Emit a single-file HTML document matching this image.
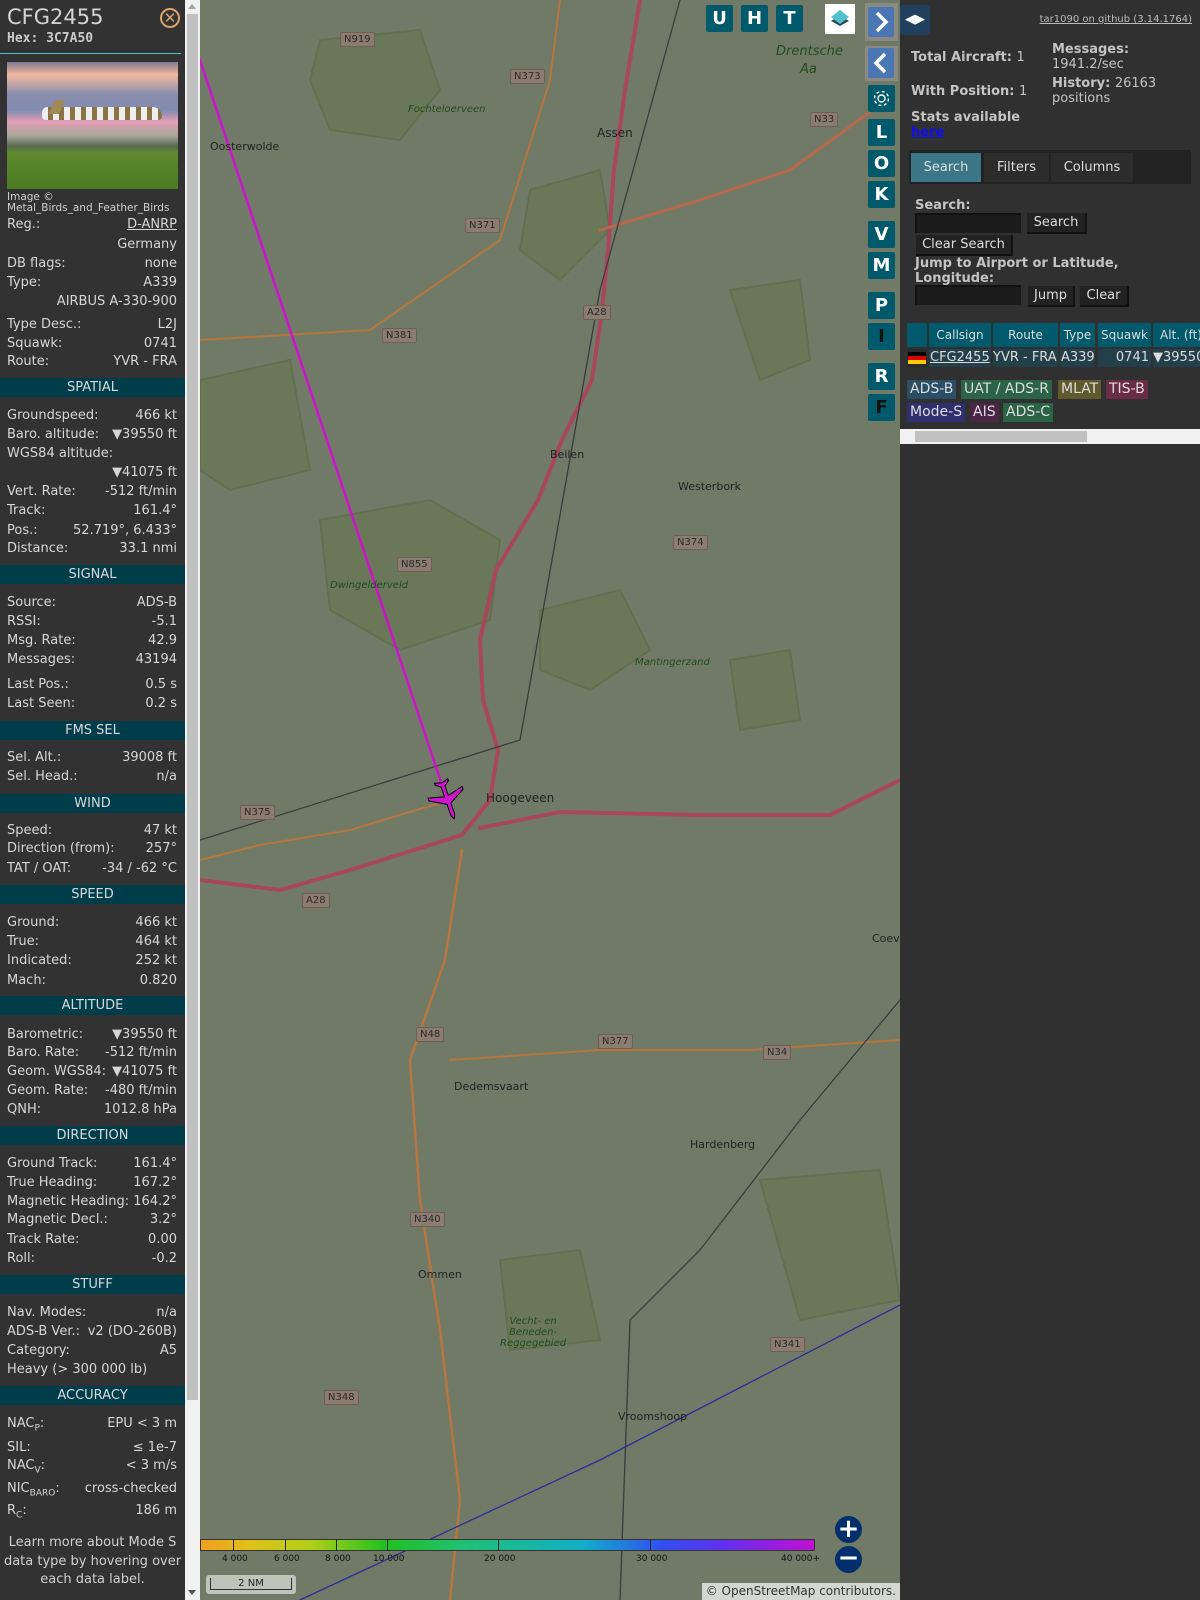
<!DOCTYPE html>
<html><head><meta charset="utf-8"><style>
*{margin:0;padding:0;box-sizing:border-box}
body{width:1200px;height:1600px;overflow:hidden;background:#303030;font-family:"DejaVu Sans","Liberation Sans",sans-serif;position:relative}
#side{position:absolute;left:0;top:0;width:185px;height:1600px;background:#323232;color:#d6d6d6;font-size:13px}
.r{position:absolute;left:7px;right:8px;height:17px;line-height:17px;white-space:nowrap}
.r .v{position:absolute;right:0;top:0}
.h{position:absolute;left:0;width:185px;background:#003d4a;color:#d8d8d8;text-align:center;font-size:13px;height:19px;line-height:19px}
#sb{position:absolute;left:185px;top:0;width:15px;height:1600px;background:#f1f1f1}
#map{position:absolute;left:200px;top:0;width:700px;height:1600px;background:#717a67;overflow:hidden}
.btn{position:absolute;width:27px;height:27px;background:#005a6b;color:#fff;font-weight:bold;font-size:18px;text-align:center;line-height:27px;border-radius:2px}
.lbl{position:absolute;font-size:11px;color:#222;white-space:nowrap}
.rl{position:absolute;font-size:10px;color:#2a2a2a;background:#8c7c70;border:1px solid #6e5f55;padding:1px 3px;border-radius:2px}
.gl{position:absolute;font-size:10px;color:#1d4f1d;font-style:italic;white-space:nowrap}
#right{position:absolute;left:900px;top:0;width:300px;height:1600px;background:#303030;color:#c8c8c8}
.b{position:absolute;font-weight:bold;font-size:13px;color:#c4c4c4;white-space:nowrap}
.bt{position:absolute;background:#222;color:#ddd;font-size:13px;border-right:2px solid #111;border-bottom:2px solid #111;text-align:center;line-height:19px;height:21px}
.inp{position:absolute;background:#1c1c1c;border-top:2px solid #111;border-left:2px solid #111;height:20px}
.th{position:absolute;top:323px;height:24px;background:#005a6b;color:#ddd;font-size:12px;text-align:center;line-height:24px;white-space:nowrap;overflow:hidden}
.td{position:absolute;top:349px;height:18px;background:#233f4a;color:#ddd;font-size:13px;line-height:18px;white-space:nowrap;overflow:hidden}
.bd{position:absolute;height:19px;line-height:19px;font-size:14px;padding:0 3px;color:#ddd}
</style></head><body>
<div id="side">
<div style="position:absolute;left:7px;top:5px;font-size:21px;color:#d4d4d4">CFG2455</div>
<div style="position:absolute;left:7px;top:31px;font-size:13px;font-weight:bold;font-family:'DejaVu Sans Mono',monospace;color:#ccc">Hex: 3C7A50</div>
<div style="position:absolute;left:160px;top:8px;width:20px;height:20px;border:2px solid #d9a46a;border-radius:50%;color:#d9a46a;font-size:15px;text-align:center;line-height:16px">✕</div>
<div style="position:absolute;left:0;top:53px;width:181px;height:1px;background:#4cc4cc"></div>
<div style="position:absolute;left:7px;top:62px;width:171px;height:127px;background:linear-gradient(#7e7a94 0%,#f2b99e 10%,#8c8fae 25%,#7f8bb0 38%,#e59fb8 47%,#a9a79c 58%,#5a6a50 66%,#5d8a2c 72%,#4a7a22 100%)">
<div style="position:absolute;left:35px;top:45px;width:120px;height:13px;background:repeating-linear-gradient(90deg,#eee 0 6px,#8a7444 6px 11px);border-radius:6px 10px 4px 4px"></div>
<div style="position:absolute;left:45px;top:38px;width:10px;height:14px;background:#a28a58;transform:skewX(-25deg)"></div>
</div>
<div style="position:absolute;left:7px;top:192px;font-size:10.5px;line-height:11px;color:#d0d0d0">Image ©<br>Metal_Birds_and_Feather_Birds</div>
<div class="r" style="top:216px">Reg.:<span class="v" style="text-decoration:underline">D-ANRP</span></div>
<div class="r" style="top:236px"><span class="v">Germany</span></div>
<div class="r" style="top:255px">DB flags:<span class="v">none</span></div>
<div class="r" style="top:274px">Type:<span class="v">A339</span></div>
<div class="r" style="top:293px"><span class="v">AIRBUS A-330-900</span></div>
<div class="r" style="top:316px">Type Desc.:<span class="v">L2J</span></div>
<div class="r" style="top:335px">Squawk:<span class="v">0741</span></div>
<div class="r" style="top:353px">Route:<span class="v">YVR - FRA</span></div>
<div class="h" style="top:378px">SPATIAL</div>
<div class="r" style="top:407px">Groundspeed:<span class="v">466 kt</span></div>
<div class="r" style="top:426px">Baro. altitude:<span class="v">▼39550 ft</span></div>
<div class="r" style="top:445px">WGS84 altitude:</div>
<div class="r" style="top:464px"><span class="v">▼41075 ft</span></div>
<div class="r" style="top:483px">Vert. Rate:<span class="v">-512 ft/min</span></div>
<div class="r" style="top:502px">Track:<span class="v">161.4°</span></div>
<div class="r" style="top:522px">Pos.:<span class="v">52.719°, 6.433°</span></div>
<div class="r" style="top:540px">Distance:<span class="v">33.1 nmi</span></div>
<div class="h" style="top:565px">SIGNAL</div>
<div class="r" style="top:594px">Source:<span class="v">ADS-B</span></div>
<div class="r" style="top:613px">RSSI:<span class="v">-5.1</span></div>
<div class="r" style="top:632px">Msg. Rate:<span class="v">42.9</span></div>
<div class="r" style="top:651px">Messages:<span class="v">43194</span></div>
<div class="r" style="top:676px">Last Pos.:<span class="v">0.5 s</span></div>
<div class="r" style="top:695px">Last Seen:<span class="v">0.2 s</span></div>
<div class="h" style="top:721px">FMS SEL</div>
<div class="r" style="top:749px">Sel. Alt.:<span class="v">39008 ft</span></div>
<div class="r" style="top:768px">Sel. Head.:<span class="v">n/a</span></div>
<div class="h" style="top:794px">WIND</div>
<div class="r" style="top:822px">Speed:<span class="v">47 kt</span></div>
<div class="r" style="top:840px">Direction (from):<span class="v">257°</span></div>
<div class="r" style="top:860px">TAT / OAT:<span class="v">-34 / -62 °C</span></div>
<div class="h" style="top:885px">SPEED</div>
<div class="r" style="top:914px">Ground:<span class="v">466 kt</span></div>
<div class="r" style="top:933px">True:<span class="v">464 kt</span></div>
<div class="r" style="top:952px">Indicated:<span class="v">252 kt</span></div>
<div class="r" style="top:972px">Mach:<span class="v">0.820</span></div>
<div class="h" style="top:996px">ALTITUDE</div>
<div class="r" style="top:1026px">Barometric:<span class="v">▼39550 ft</span></div>
<div class="r" style="top:1044px">Baro. Rate:<span class="v">-512 ft/min</span></div>
<div class="r" style="top:1063px">Geom. WGS84:<span class="v">▼41075 ft</span></div>
<div class="r" style="top:1082px">Geom. Rate:<span class="v">-480 ft/min</span></div>
<div class="r" style="top:1101px">QNH:<span class="v">1012.8 hPa</span></div>
<div class="h" style="top:1126px">DIRECTION</div>
<div class="r" style="top:1155px">Ground Track:<span class="v">161.4°</span></div>
<div class="r" style="top:1174px">True Heading:<span class="v">167.2°</span></div>
<div class="r" style="top:1193px">Magnetic Heading:<span class="v">164.2°</span></div>
<div class="r" style="top:1211px">Magnetic Decl.:<span class="v">3.2°</span></div>
<div class="r" style="top:1231px">Track Rate:<span class="v">0.00</span></div>
<div class="r" style="top:1250px">Roll:<span class="v">-0.2</span></div>
<div class="h" style="top:1275px">STUFF</div>
<div class="r" style="top:1304px">Nav. Modes:<span class="v">n/a</span></div>
<div class="r" style="top:1323px">ADS-B Ver.:<span class="v">v2 (DO-260B)</span></div>
<div class="r" style="top:1342px">Category:<span class="v">A5</span></div>
<div class="r" style="top:1361px">Heavy (&gt; 300 000 lb)</div>
<div class="h" style="top:1386px">ACCURACY</div>
<div class="r" style="top:1415px">NAC<sub style="font-size:9px">P</sub>:<span class="v">EPU &lt; 3 m</span></div>
<div class="r" style="top:1439px">SIL:<span class="v">≤ 1e-7</span></div>
<div class="r" style="top:1457px">NAC<sub style="font-size:9px">V</sub>:<span class="v">&lt; 3 m/s</span></div>
<div class="r" style="top:1480px">NIC<sub style="font-size:9px">BARO</sub>:<span class="v">cross-checked</span></div>
<div class="r" style="top:1502px">R<sub style="font-size:9px">C</sub>:<span class="v">186 m</span></div>
<div style="position:absolute;left:0;width:185px;top:1534px;text-align:center;font-size:13px;line-height:18.5px;color:#d0d0d0">Learn more about Mode S data type by hovering over each data label.</div>
</div>
<div id="sb"><div style="position:absolute;left:2px;top:14px;width:11px;height:1386px;background:#c1c1c1"></div>
<div style="position:absolute;left:3px;top:4px;border:4px solid transparent;border-bottom:5px solid #a3a3a3;border-top:0"></div>
<div style="position:absolute;left:3px;top:1590px;border:4px solid transparent;border-top:5px solid #505050;border-bottom:0"></div></div>

<div id="map">
<svg width="700" height="1600" style="position:absolute;left:0;top:0">
<g fill="#66754f" stroke="#56693f" stroke-width="2" opacity=".55">
<path d="M120 40 L220 30 L240 90 L200 140 L130 130 L110 80Z"/>
<path d="M120 520 L230 500 L300 540 L290 620 L200 650 L130 610Z"/>
<path d="M330 190 L400 170 L410 230 L360 280 L320 250Z"/>
<path d="M530 290 L600 280 L610 360 L560 380Z"/>
<path d="M340 610 L420 590 L450 650 L390 690 L340 670Z"/>
<path d="M530 660 L590 650 L600 720 L540 730Z"/>
<path d="M560 1180 L680 1170 L700 1300 L600 1320Z"/>
<path d="M300 1260 L380 1250 L400 1340 L310 1350Z"/>
<path d="M0 380 L90 360 L110 470 L30 490 L0 470Z"/>
</g>
<g fill="none" stroke-linecap="round">
<path d="M440 0 L425 90 L414 170 L408 250 L402 310 L392 380 L362 440 L338 500 L296 570 L280 640 L283 700 L298 750 L290 800 L262 835 L150 870 L80 890 L0 880" stroke="#a8465a" stroke-width="4"/>
<path d="M280 828 L360 812 L500 815 L630 815 L700 780" stroke="#a8465a" stroke-width="4"/>
<path d="M400 230 L500 200 L590 170 L670 112" stroke="#b4684e" stroke-width="3"/>
<path d="M262 850 L245 960 L210 1060 L220 1200 L240 1330 L260 1500 L250 1600" stroke="#b5763f" stroke-width="2.5"/>
<path d="M0 860 L60 845 L150 830 L250 800" stroke="#b5763f" stroke-width="2"/>
<path d="M250 1060 L400 1050 L550 1050 L700 1040" stroke="#b5763f" stroke-width="2"/>
<path d="M360 0 L350 80 L300 240 L170 330 L0 340" stroke="#b5763f" stroke-width="2"/>
<path d="M480 0 L400 290 L320 740 L0 840" stroke="#3c3c3c" stroke-width="1.3"/>
<path d="M700 1000 L600 1120 L500 1250 L430 1320 L420 1600" stroke="#3c3c3c" stroke-width="1.3"/>
<path d="M100 1600 L400 1460 L700 1305" stroke="#2a2f9a" stroke-width="1.3"/>
<path d="M0 60 L243 788" stroke="#cc14cc" stroke-width="2.5"/>
</g>
<g transform="translate(247,798) rotate(161)" fill="#d016d0" stroke="#000" stroke-width="1">
<path d="M0 -22 L2 -18 L2 -6 L18 3 L18 6 L2 2 L2 12 L7 16 L7 18 L0 16 L-7 18 L-7 16 L-2 12 L-2 2 L-18 6 L-18 3 L-2 -6 L-2 -18Z"/>
</g>
</svg>
<div class="lbl" style="left:397px;top:126px;font-size:12px">Assen</div>
<div class="lbl" style="left:10px;top:140px">Oosterwolde</div>
<div class="lbl" style="left:350px;top:448px">Beilen</div>
<div class="lbl" style="left:478px;top:480px">Westerbork</div>
<div class="lbl" style="left:286px;top:791px;font-size:12px">Hoogeveen</div>
<div class="lbl" style="left:254px;top:1080px">Dedemsvaart</div>
<div class="lbl" style="left:490px;top:1138px">Hardenberg</div>
<div class="lbl" style="left:218px;top:1268px">Ommen</div>
<div class="lbl" style="left:418px;top:1410px">Vroomshoop</div>
<div class="lbl" style="left:672px;top:932px">Coevo</div>
<div class="gl" style="left:576px;top:44px;font-size:13px">Drentsche</div>
<div class="gl" style="left:600px;top:62px;font-size:13px">Aa</div>
<div class="gl" style="left:208px;top:104px">Fochteloerveen</div>
<div class="gl" style="left:130px;top:580px">Dwingelderveld</div>
<div class="gl" style="left:435px;top:657px">Mantingerzand</div>
<div class="gl" style="left:300px;top:1316px;text-align:center">Vecht- en<br>Beneden-<br>Reggegebied</div>
<div class="rl" style="left:140px;top:32px">N919</div>
<div class="rl" style="left:310px;top:69px">N373</div>
<div class="rl" style="left:610px;top:112px">N33</div>
<div class="rl" style="left:265px;top:218px">N371</div>
<div class="rl" style="left:182px;top:328px">N381</div>
<div class="rl" style="left:383px;top:305px">A28</div>
<div class="rl" style="left:197px;top:557px">N855</div>
<div class="rl" style="left:473px;top:535px">N374</div>
<div class="rl" style="left:40px;top:805px">N375</div>
<div class="rl" style="left:102px;top:893px">A28</div>
<div class="rl" style="left:216px;top:1027px">N48</div>
<div class="rl" style="left:398px;top:1034px">N377</div>
<div class="rl" style="left:563px;top:1045px">N34</div>
<div class="rl" style="left:210px;top:1212px">N340</div>
<div class="rl" style="left:570px;top:1337px">N341</div>
<div class="rl" style="left:124px;top:1390px">N348</div>
<!-- controls -->
<div class="btn" style="left:506px;top:5px">U</div>
<div class="btn" style="left:541px;top:5px">H</div>
<div class="btn" style="left:576px;top:5px">T</div>
<div style="position:absolute;left:625px;top:4px;width:30px;height:30px;background:#fff">
<svg width="30" height="30"><path d="M6 17 L15 22 L24 17 L15 12Z" fill="#2b4a55"/><path d="M6 13 L15 6 L24 13 L15 20Z" fill="#4fc3cf"/></svg></div>
<div style="position:absolute;left:665px;top:3px;width:33px;height:38px;background:#8a8a82"><div style="position:absolute;left:3px;top:4px;width:26px;height:30px;background:#4a76b4;border-radius:2px"><svg width="26" height="30"><path d="M9 6 L18 15 L9 24" stroke="#fff" stroke-width="3.5" fill="none"/></svg></div></div>
<div style="position:absolute;left:665px;top:46px;width:33px;height:35px;background:#8a8a82"><div style="position:absolute;left:3px;top:2px;width:26px;height:30px;background:#4a76b4;border-radius:2px"><svg width="26" height="30"><path d="M17 6 L8 15 L17 24" stroke="#fff" stroke-width="3.5" fill="none"/></svg></div></div>
<div class="btn" style="left:668px;top:85px;font-size:17px"><svg width="27" height="27"><circle cx="13.5" cy="13.5" r="3.5" stroke="#fff" stroke-width="1.4" fill="none"/><circle cx="13.5" cy="13.5" r="7" stroke="#fff" stroke-width="1.4" fill="none" stroke-dasharray="3 2.5"/></svg></div>
<div class="btn" style="left:668px;top:119px">L</div>
<div class="btn" style="left:668px;top:150px">O</div>
<div class="btn" style="left:668px;top:181px">K</div>
<div class="btn" style="left:668px;top:221px">V</div>
<div class="btn" style="left:668px;top:252px">M</div>
<div class="btn" style="left:668px;top:292px">P</div>
<div class="btn" style="left:668px;top:323px;color:#111">I</div>
<div class="btn" style="left:668px;top:363px">R</div>
<div class="btn" style="left:668px;top:394px;color:#111">F</div>
<!-- color bar -->
<div style="position:absolute;left:0;top:1539px;width:615px;height:12px;border:1px solid #333;background:linear-gradient(90deg,#f0a020 0%,#e0c018 8%,#b0d018 18%,#20c020 30%,#20c070 42%,#10b0c8 62%,#3050f0 75%,#6030f0 85%,#c010d0 100%)"></div>
<div style="position:absolute;left:0;top:1539px;width:615px;height:12px">
<div style="position:absolute;left:33px;width:1px;height:12px;background:#222"></div><div style="position:absolute;left:85px;width:1px;height:12px;background:#222"></div><div style="position:absolute;left:136px;width:1px;height:12px;background:#222"></div><div style="position:absolute;left:187px;width:1px;height:12px;background:#222"></div><div style="position:absolute;left:298px;width:1px;height:12px;background:#222"></div><div style="position:absolute;left:450px;width:1px;height:12px;background:#222"></div></div>
<div style="position:absolute;top:1554px;left:0;width:640px;font-size:9px;color:#111;white-space:nowrap">
<span style="position:absolute;left:22px">4 000</span><span style="position:absolute;left:74px">6 000</span><span style="position:absolute;left:125px">8 000</span><span style="position:absolute;left:173px">10 000</span><span style="position:absolute;left:284px">20 000</span><span style="position:absolute;left:436px">30 000</span><span style="position:absolute;left:581px">40 000+</span></div>
<div style="position:absolute;left:635px;top:1516px;width:27px;height:27px;border-radius:50%;background:#002f6c;color:#fff;font-size:26px;font-weight:bold;text-align:center;line-height:26px">+</div>
<div style="position:absolute;left:635px;top:1546px;width:27px;height:27px;border-radius:50%;background:#002f6c;color:#fff;font-size:26px;font-weight:bold;text-align:center;line-height:25px">−</div>
<div style="position:absolute;left:6px;top:1575px;width:90px;height:19px;background:rgba(255,255,255,.55);border-radius:3px"><div style="position:absolute;left:4px;top:3px;width:82px;height:12px;border:1px solid #333;border-top:0;font-size:10px;text-align:center;line-height:11px;color:#222">2 NM</div></div>
<div style="position:absolute;right:0;top:1583px;height:17px;padding:0 4px;background:rgba(255,255,255,.7);font-size:12px;color:#333;line-height:17px">© OpenStreetMap contributors.</div>
</div>

<div id="right">
<div style="position:absolute;left:0;top:5px;width:30px;height:30px;background:#21405f;border-radius:3px;color:#fff;font-size:13px;text-align:center;line-height:30px">◀▶</div>
<div style="position:absolute;right:8px;top:14px;font-size:10px;color:#bbb;text-decoration:underline">tar1090 on github (3.14.1764)</div>
<div class="b" style="left:11px;top:50px">Total Aircraft: <span style="font-weight:normal">1</span></div>
<div class="b" style="left:152px;top:42px;line-height:15px">Messages:<br><span style="font-weight:normal">1941.2/sec</span></div>
<div class="b" style="left:152px;top:76px;line-height:15px">History: <span style="font-weight:normal">26163</span><br><span style="font-weight:normal">positions</span></div>
<div class="b" style="left:11px;top:84px">With Position: <span style="font-weight:normal">1</span></div>
<div class="b" style="left:11px;top:110px">Stats available</div>
<div class="b" style="left:11px;top:125px;color:#1010ee;text-decoration:underline">here</div>
<div style="position:absolute;left:9px;top:150px;width:282px;height:34px;background:#222"></div>
<div style="position:absolute;left:11px;top:153px;width:70px;height:29px;background:#3b7687;color:#ddd;font-size:13px;text-align:center;line-height:29px">Search</div>
<div style="position:absolute;left:84px;top:153px;width:65px;height:29px;background:#2c2c2c;color:#ddd;font-size:13px;text-align:center;line-height:29px">Filters</div>
<div style="position:absolute;left:151px;top:153px;width:82px;height:29px;background:#2c2c2c;color:#ddd;font-size:13px;text-align:center;line-height:29px">Columns</div>
<div class="b" style="left:15px;top:198px">Search:</div>
<div class="inp" style="left:15px;top:213px;width:106px"></div>
<div class="bt" style="left:127px;top:213px;width:60px">Search</div>
<div class="bt" style="left:16px;top:235px;width:97px">Clear Search</div>
<div class="b" style="left:15px;top:256px;line-height:15px">Jump to Airport or Latitude,<br>Longitude:</div>
<div class="inp" style="left:15px;top:285px;width:106px"></div>
<div class="bt" style="left:128px;top:286px;width:47px">Jump</div>
<div class="bt" style="left:180px;top:286px;width:49px">Clear</div>
<div class="th" style="left:7px;width:20px"></div>
<div class="th" style="left:29px;width:62px">Callsign</div>
<div class="th" style="left:93px;width:65px">Route</div>
<div class="th" style="left:160px;width:35px">Type</div>
<div class="th" style="left:198px;width:53px">Squawk</div>
<div class="th" style="left:253px;width:47px;text-align:left;padding-left:7px">Alt. (ft)</div>
<div class="td" style="left:7px;width:20px;background:#2a2a2a"><div style="position:absolute;left:1px;top:3px;width:18px;height:12px;background:linear-gradient(#000 33%,#d00 33% 66%,#fc0 66%)"></div></div>
<div class="td" style="left:29px;width:62px;padding-left:1px;text-decoration:underline">CFG2455</div>
<div class="td" style="left:93px;width:65px">YVR - FRA</div>
<div class="td" style="left:160px;width:35px;padding-left:1px">A339</div>
<div class="td" style="left:198px;width:53px;text-align:right;padding-right:2px">0741</div>
<div class="td" style="left:253px;width:47px">▼39550</div>
<div class="bd" style="left:7px;top:380px;background:#2a4e66">ADS-B</div>
<div class="bd" style="left:61px;top:380px;background:#2b6346">UAT / ADS-R</div>
<div class="bd" style="left:158px;top:380px;background:#5e5a2c">MLAT</div>
<div class="bd" style="left:206px;top:380px;background:#6a2c44">TIS-B</div>
<div class="bd" style="left:7px;top:403px;background:#2f2e6e">Mode-S</div>
<div class="bd" style="left:70px;top:403px;background:#4a2545">AIS</div>
<div class="bd" style="left:103px;top:403px;background:#2b6346">ADS-C</div>
<div style="position:absolute;left:0;top:429px;width:300px;height:15px;background:#f1f1f1"><div style="position:absolute;left:15px;top:2px;width:172px;height:11px;background:#c1c1c1"></div></div>
</div>
</body></html>
